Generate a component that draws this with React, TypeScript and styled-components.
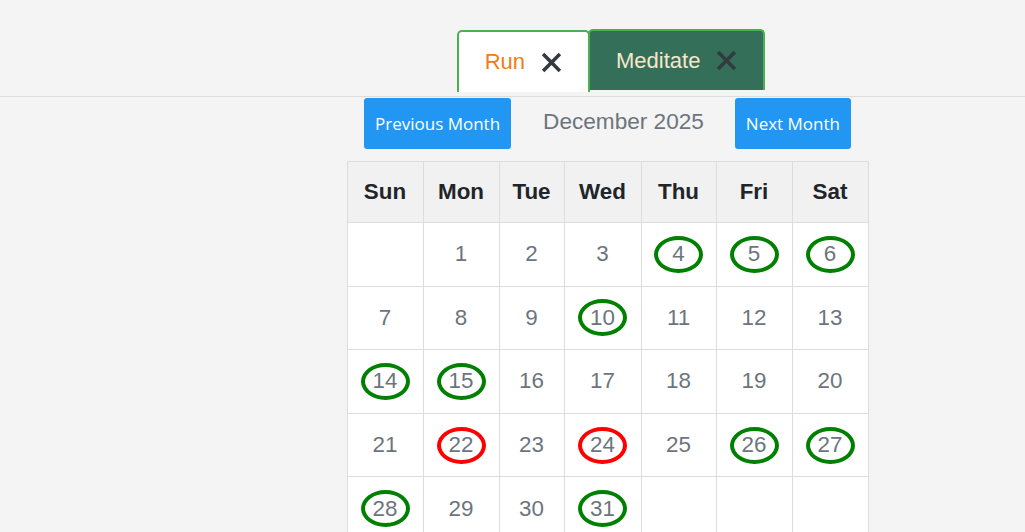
import React from "react";
import styled, { createGlobalStyle } from "styled-components";

const GlobalStyle = createGlobalStyle`
  html, body {
    margin: 0;
    padding: 0;
    background: #f4f4f4;
    font-family: "Liberation Sans", Arial, sans-serif;
  }
  * { box-sizing: border-box; }
`;

const Page = styled.div`
  min-height: 532px;
  background: #f4f4f4;
`;

const TopBar = styled.header`
  height: 97px;
  border-bottom: 1px solid #dcdcdc;
  padding-left: 197px;
  display: flex;
  justify-content: center;
  align-items: flex-start;
  padding-top: 29px;
`;

const TabList = styled.div`
  display: flex;
  align-items: flex-start;
`;

const Tab = styled.div<{ $active?: boolean }>`
  display: flex;
  align-items: center;
  gap: 16px;
  padding: 0 26px 0 26px;
  margin-top: ${(p) => (p.$active ? "1px" : "0")};
  margin-left: ${(p) => (p.$active ? "0" : "-2px")};
  height: ${(p) => (p.$active ? "62px" : "61px")};
  border: 2px solid #4caf50;
  border-bottom: none;
  border-radius: 5px 5px 0 0;
  background: ${(p) => (p.$active ? "#ffffff" : "#346f5a")};
  color: ${(p) => (p.$active ? "#ef7d12" : "#f6e7cb")};
  font-size: 22px;
  cursor: pointer;
`;

const CloseIcon = styled.svg`
  display: block;
  width: 21px;
  height: 21px;
  flex: none;
`;

const Close = () => (
  <CloseIcon viewBox="0 0 20 20">
    <path d="M2 2 L18 18 M18 2 L2 18" stroke="#343a40" strokeWidth="3.4" fill="none" />
  </CloseIcon>
);

const Main = styled.main`
  padding-left: 190px;
  display: flex;
  flex-direction: column;
  align-items: center;
`;

const Nav = styled.div`
  display: flex;
  align-items: center;
  margin-top: 1px;
`;

const NavButton = styled.button`
  height: 51px;
  padding: 0 11px;
  border: none;
  border-radius: 3px;
  background: #2196f3;
  color: #ffffff;
  font-family: "Open Sans", sans-serif;
  font-size: 17px;
  cursor: pointer;
`;

const MonthTitle = styled.h2`
  margin: 0 31px 0 32px;
  font-weight: normal;
  font-size: 22.6px;
  color: #6c757d;
  position: relative;
  top: -2px;
`;

const CalendarGrid = styled.div`
  margin-top: 12px;
  display: grid;
  grid-template-columns: 75px 75px 64px 76px 74px 75px 75px;
  grid-template-rows: 60px;
  grid-auto-rows: 62.6px;
  gap: 1px;
  background: #dddddd;
  border: 1px solid #dddddd;
`;

const HeaderCell = styled.div`
  background: #f1f1f1;
  display: flex;
  align-items: center;
  justify-content: center;
  font-weight: bold;
  font-size: 22.4px;
  color: #212529;
`;

const DayCell = styled.div`
  background: #ffffff;
  display: flex;
  align-items: center;
  justify-content: center;
  font-size: 22.4px;
  color: #6c757d;
`;

const Mark = styled.span<{ $color: string }>`
  display: inline-flex;
  align-items: center;
  justify-content: center;
  width: 49px;
  height: 37px;
  border: 4px solid ${(p) => p.$color};
  border-radius: 50%;
`;

const weekdays = ["Sun", "Mon", "Tue", "Wed", "Thu", "Fri", "Sat"];
const green = new Set([4, 5, 6, 10, 14, 15, 26, 27, 28, 31]);
const red = new Set([22, 24]);

export default function App() {
  const cells: (number | null)[] = [null];
  for (let d = 1; d <= 31; d++) cells.push(d);
  while (cells.length % 7 !== 0) cells.push(null);

  return (
    <Page>
      <GlobalStyle />
      <TopBar>
        <TabList>
          <Tab $active>
            <span>Run</span>
            <Close />
          </Tab>
          <Tab>
            <span>Meditate</span>
            <Close />
          </Tab>
        </TabList>
      </TopBar>
      <Main>
        <Nav>
          <NavButton>Previous Month</NavButton>
          <MonthTitle>December 2025</MonthTitle>
          <NavButton>Next Month</NavButton>
        </Nav>
        <CalendarGrid>
          {weekdays.map((w) => (
            <HeaderCell key={w}>{w}</HeaderCell>
          ))}
          {cells.map((d, i) => (
            <DayCell key={i}>
              {d === null ? null : green.has(d) ? (
                <Mark $color="#008000">{d}</Mark>
              ) : red.has(d) ? (
                <Mark $color="#ff0000">{d}</Mark>
              ) : (
                d
              )}
            </DayCell>
          ))}
        </CalendarGrid>
      </Main>
    </Page>
  );
}
